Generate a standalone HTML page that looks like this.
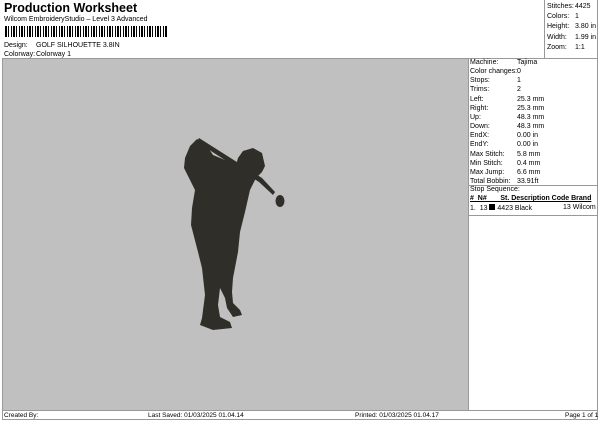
<!DOCTYPE html><html><head><style>
body{margin:0;width:600px;height:424px;background:#fff;font-family:"Liberation Sans",sans-serif;color:#000;position:relative;overflow:hidden}
.a{position:absolute;white-space:nowrap;font-size:7px}
</style></head><body>
<div class="a" style="left:4px;top:1px;font-size:12.5px;font-weight:bold">Production Worksheet</div>
<div class="a" style="left:4px;top:16px">Wilcom EmbroideryStudio – Level 3 Advanced</div>
<div class="a" style="left:5px;top:26px;width:162px;height:11px;background:repeating-linear-gradient(90deg,#000 0 2px,#fff 2px 3px,#000 3px 4px,#fff 4px 6px,#000 6px 7px,#fff 7px 8px)"></div>
<div class="a" style="left:4px;top:42px">Design:</div><div class="a" style="left:36px;top:42px">GOLF SILHOUETTE 3.8IN</div>
<div class="a" style="left:4px;top:51px">Colorway:</div><div class="a" style="left:36px;top:51px">Colorway 1</div>
<div class="a" style="left:544px;top:0;width:1px;height:58px;background:#999"></div>
<div class="a" style="left:2px;top:58px;width:596px;height:1px;background:#999"></div>
<div class="a" style="left:547px;top:2px;line-height:10.2px">Stitches:<br>Colors:<br>Height:<br>Width:<br>Zoom:</div>
<div class="a" style="left:575px;top:2px;line-height:10.2px">4425<br>1<br>3.80 in<br>1.99 in<br>1:1</div>
<div class="a" style="left:3px;top:59px;width:465px;height:351px;background:#c0c0c0"></div>
<div class="a" style="left:2px;top:59px;width:1px;height:361px;background:#999"></div>
<div class="a" style="left:597px;top:0;width:1px;height:420px;background:#999"></div>
<svg class="a" style="left:0;top:0" width="600" height="424"><g fill="#2f2e28">
<path d="M197,139 L190,146 L185,158 L184,168 L195,190 L192,208 L191,225 L198,252 L202,268 L205,295 L202,318 L200,325 L213,330 L232,328 L230,322 L220,317 L218,305 L220,288 L225,298 L227,308 L233,317 L242,315 L240,310 L233,303 L232,292 L233,278 L238,252 L240,232 L245,212 L250,190 L256,178 L262,172 L265,166 L262,153 L253,148 L243,151 L238,158 L236,165 L225,160 L213,155 L205,143 Z"/>
<path d="M199,138 L262,178 L275,192 L273,195 L259,182 L197,142 Z"/>
<ellipse cx="280" cy="201" rx="4.5" ry="6"/></g></svg>
<div class="a" style="left:468px;top:59px;width:1px;height:351px;background:#999"></div>
<div class="a" style="left:470px;top:58px;line-height:9.15px">Machine:<br>Color changes:<br>Stops:<br>Trims:<br>Left:<br>Right:<br>Up:<br>Down:<br>EndX:<br>EndY:<br>Max Stitch:<br>Min Stitch:<br>Max Jump:<br>Total Bobbin:</div>
<div class="a" style="left:517px;top:58px;line-height:9.15px">Tajima<br>0<br>1<br>2<br>25.3 mm<br>25.3 mm<br>48.3 mm<br>48.3 mm<br>0.00 in<br>0.00 in<br>5.8 mm<br>0.4 mm<br>6.6 mm<br>33.91ft</div>
<div class="a" style="left:469px;top:185px;width:128px;height:1px;background:#999"></div>
<div class="a" style="left:470px;top:186px">Stop Sequence:</div>
<div class="a" style="left:470px;top:195px;font-weight:bold;text-decoration:underline">#&nbsp; N#&nbsp;&nbsp;&nbsp;&nbsp;&nbsp;&nbsp; St. Description Code Brand</div>
<div class="a" style="left:470px;top:204px">1.&nbsp; 13 <span style="display:inline-block;width:6px;height:6px;background:#000"></span> 4423 Black</div>
<div class="a" style="left:563px;top:204px">13 Wilcom</div>
<div class="a" style="left:469px;top:215px;width:128px;height:1px;background:#999"></div>
<div class="a" style="left:2px;top:410px;width:596px;height:1px;background:#999"></div>
<div class="a" style="left:2px;top:419px;width:596px;height:1px;background:#999"></div>
<div class="a" style="left:4px;top:412px;font-size:6.5px">Created By:</div>
<div class="a" style="left:148px;top:412px;font-size:6.5px">Last Saved: 01/03/2025 01.04.14</div>
<div class="a" style="left:355px;top:412px;font-size:6.5px">Printed: 01/03/2025 01.04.17</div>
<div class="a" style="left:565px;top:412px;font-size:6.5px">Page 1 of 1</div>
</body></html>
